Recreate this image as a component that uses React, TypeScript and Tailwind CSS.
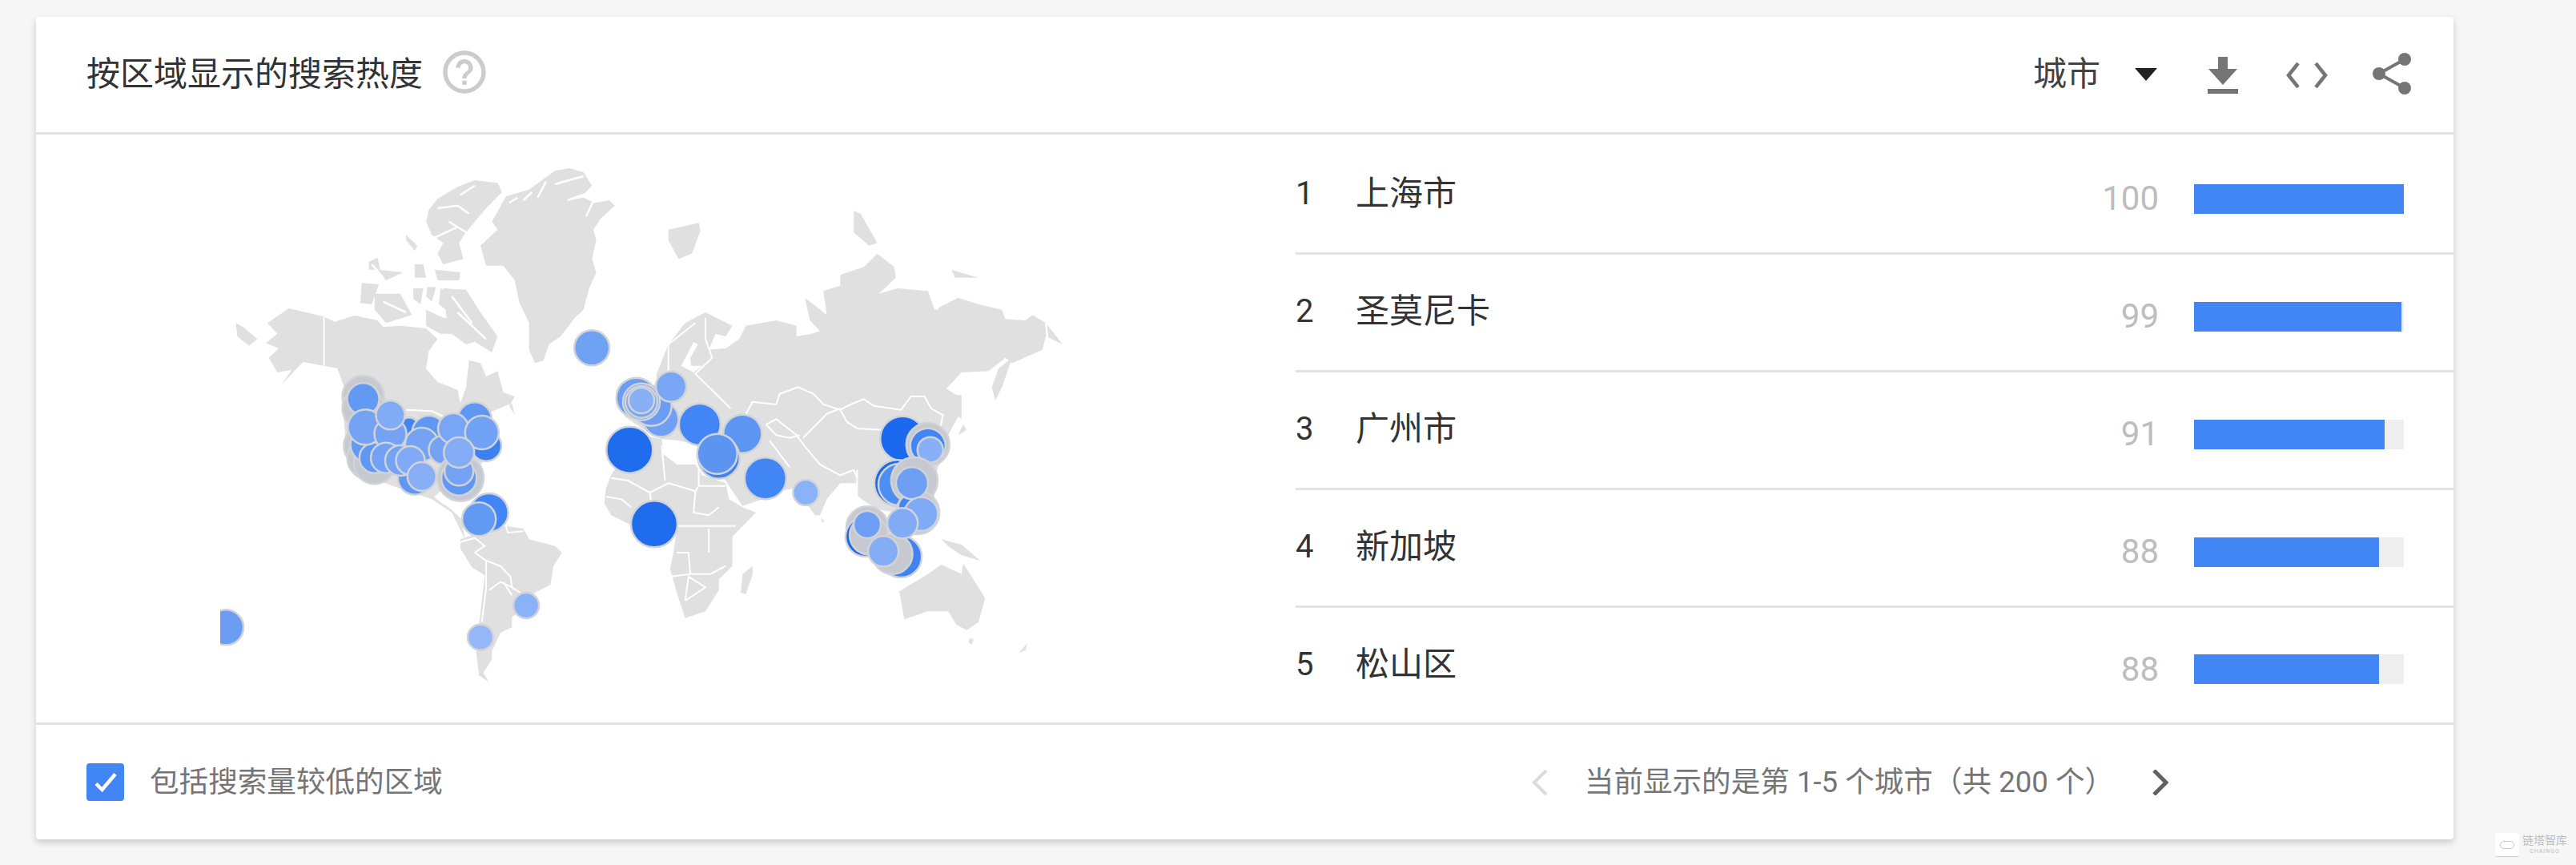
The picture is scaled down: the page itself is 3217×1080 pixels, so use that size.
import React from "react";

type Pt = [number, number];
const mk = (ox: number, oy: number, sx: number) => (a: number[]): Pt[] => {
  const r: Pt[] = [];
  for (let i = 0; i < a.length; i += 2) r.push([ox + a[i] / sx, oy + a[i + 1] / 3]);
  return r;
};
const z3 = mk(250, 190, 2.8);
const z4 = mk(250, 500, 2.8);
const z5 = mk(700, 190, 2.376);
const z6 = mk(700, 500, 2.376);
const s = (p: Pt[]) => p.map((q) => q[0].toFixed(1) + "," + q[1].toFixed(1)).join(" ");

const land: Pt[][] = [
  // Greenland
  z3([1290,60,1340,75,1370,125,1340,160,1290,180,1340,170,1380,190,1430,180,1450,200,1400,250,1375,290,1385,330,1370,400,1385,450,1360,510,1340,590,1310,620,1260,690,1220,720,1200,780,1170,790,1150,740,1150,640,1115,560,1100,480,1060,425,1000,425,980,350,1040,290,1020,260,1070,165,1150,140,1240,70]),
  // North America
  [...z3([235,640,310,585,430,615,470,635,540,612,620,630,640,655,700,650,790,660,830,700,800,745,790,810,830,860,900,890,910,940,930,880,940,780,980,790,1000,840,1040,820,1060,900,1100,915,1080,950,1100,985]),
   ...z4([1090,10,1000,50,1030,130,1000,220,960,260,980,320,900,360,840,340,820,360,880,410,915,445,925,520,880,420,810,370,700,330,620,300,540,250,510,170,500,40]),
   ...z3([510,900,480,810,430,800,360,785,320,830,285,870,320,815,270,825,240,770,275,735,230,715,270,680])],
  z3([125,640,150,655,200,700,170,725,130,690]),
  // Arctic islands
  z3([900,130,960,105,1040,115,1055,150,1000,210,960,260,930,300,905,340,920,400,850,420,830,380,850,340,810,310,790,260,800,215,830,175]),
  z3([850,510,930,515,980,600,1040,690,1020,750,960,710,930,720,880,680,860,610]),
  z3([610,530,700,530,740,610,650,640,610,590]),
  z3([565,490,625,495,600,570,560,565]),
  z3([590,410,620,395,630,440,590,440]),
  z3([620,440,710,450,650,480]),
  z3([820,440,910,450,905,480,830,480]),
  z3([750,420,780,420,790,470,750,470]),
  z3([745,510,780,510,770,570,745,550]),
  z3([795,505,825,505,810,560,790,540]),
  z3([840,510,860,520,860,590,835,570]),
  z3([720,310,760,350,750,370,720,330]),
  z3([790,590,850,620,880,620,900,680,840,680,790,650]),
  // South America
  z4([910,520,960,500,1000,490,1070,470,1130,480,1150,520,1240,545,1265,570,1235,620,1225,690,1170,720,1140,780,1090,810,1090,850,1050,870,1020,940,1020,970,990,1020,1010,1055,975,1030,965,940,975,840,990,700,995,655,950,625,910,555]),
  // Eurasia
  [...z5([285,830,320,720,370,640,430,600,510,650,490,690,460,680,440,740,490,735,530,700,550,650,640,630,700,650,700,690,745,680,770,670,740,630,725,545,790,610,780,520,830,500,830,460,900,430,940,380,990,430,995,470,945,530,1000,510,1090,520,1110,590,1180,545,1240,570,1310,590,1320,625,1380,630,1400,610,1440,640,1490,720,1440,690,1430,740,1340,790,1320,770,1270,820,1190,825,1145,885,1175,910,1190,910,1190,1000]),
   ...z6([1180,60,1150,130,1140,200,1120,250,1110,300,1110,420,1040,460,1010,425,960,410,975,420,930,400,880,360,880,310,830,310,790,370,770,430,755,430,720,370,690,330,650,340,600,370,540,395,495,310,470,260,420,170,350,150,300,145,260,120,190,60,200,20]),
   ...z5([250,920,285,860])],
  // Africa
  z6([130,385,135,330,150,280,190,200,240,130,300,145,305,200,345,240,400,240,420,280,490,310,500,370,540,400,580,420,510,510,510,620,470,670,470,710,430,790,370,815,345,720,325,630,335,570,345,480,300,470,215,470,150,430]),
  z6([570,620,570,650,550,725,535,720,540,650]),
  // Australia & co
  z6([1130,615,1190,650,1195,610,1260,740,1240,830,1205,860,1175,840,1150,790,1090,790,1020,820,1005,715,1090,650]),
  z6([1215,890,1225,895,1220,915,1210,905]),
  z6([1385,910,1360,945,1380,935]),
  z6([1130,520,1190,540,1245,600,1190,580,1150,545]),
  z6([775,440,785,455,775,455]),
  z6([1195,90,1205,110,1180,130]),
  // Siberia islands
  z5([320,290,410,265,415,295,390,380,350,400,320,330]),
  z5([870,220,890,230,940,340,915,350,870,300]),
  z5([1160,440,1240,470,1170,470]),
  z5([1300,810,1340,770,1310,880,1290,930,1280,880]),
];

const water: Pt[][] = [
  z6([310,170,340,160,395,175,400,240,345,240,310,200]),
  z5([358,800,395,712,408,720,385,770,388,800,420,800,395,825]),
  z3([800,745,860,740,930,770,940,800,910,890,830,860,790,810]),
];

const fjords: Pt[][] = [
  z3([1080,190,1110,170]), z3([1130,180,1160,150]), z3([1180,170,1210,110]), z3([1240,120,1340,90]),
  z3([1285,180,1350,155]), z3([1350,240,1380,170]),
  z3([830,210,900,200,940,230]), z3([870,260,930,300]), z3([820,320,900,280]), z3([910,160,960,125]),
  z3([880,540,950,640]), z3([900,600,1000,700]),
  z3([640,560,720,600]), z3([600,420,640,470]),
  z5([1440,640,1445,700]), z5([1100,550,1120,590]),
];

const borders: Pt[][] = [
  z3([433,618,433,800]),
  z4([720,35,810,40,850,60]),
  z4([960,570,1000,600,1050,620,1085,660,1090,700,1120,720]),
  z4([1000,600,1000,700,985,830]),
  z4([1010,710,1050,680,1090,700]),
  z4([1060,680,1090,730]),
  z4([1070,470,1075,495,1130,490]),
  z4([910,530,960,515,995,545,960,570]),
  z4([820,360,850,385,880,400]),
  z5([550,980,570,935,640,945,650,905,705,880,750,905,780,945,830,965,860,945,900,925,930,950,1010,965,1040,915,1080,915,1100,960,1135,985,1125,1040]),
  z5([830,965,850,1010,880,1035,950,1040,1010,1010]),
  z5([320,820,320,720,400,640]),
  z5([430,620,430,700,450,770,400,830,440,880,505,960]),
  z5([550,980,580,1010]),
  z6([610,90,640,70,700,130,730,180,770,240,830,280,870,260,880,290]),
  z6([720,140,790,50,830,30]),
  z6([610,90,640,130,680,140,710,130]),
  z6([620,150,680,250]),
  z6([880,260,880,360,920,400]),
  z6([150,290,200,300,265,345,320,310,350,320,400,340,410,320,410,250]),
  z6([300,170,310,300]),
  z6([265,345,270,390]),
  z6([410,320,490,320]),
  z6([400,340,395,420,440,430,470,400]),
  z6([345,470,470,470,520,470]),
  z6([345,570,380,570,385,650,325,660]),
  z6([385,650,445,650,490,620]),
  z6([440,570,440,480]),
  z6([370,750,380,660,430,700,370,750]),
  z6([135,360,180,370,210,400]),
];

type C = [Pt[], number, string];
const G = "#c6c9cf";
const at = (f: (a: number[]) => Pt[], x: number, y: number, r: number, c: string): C => [f([x, y]), r, c];
const dots: C[] = [
  at(z4,570,-15,26,G), at(z4,570,30,26,G), at(z4,575,170,26,G), at(z4,590,215,27,G), at(z4,610,235,26,G),
  at(z4,570,-5,20,"#6299f2"), at(z4,590,165,23,"#6299f2"), at(z4,610,215,19,"#5f97f3"),
  at(z4,578,100,22,"#75a3f4"), at(z4,730,100,12,"#4285f4"), at(z4,665,125,20,"#74a3f5"), at(z4,665,55,18,"#82abf5"),
  at(z4,650,215,19,"#72a2f5"), at(z4,800,120,21,"#5f97f3"), at(z4,775,165,21,"#74a2f5"),
  at(z4,750,290,21,"#5f97f3"), at(z4,700,225,19,"#74a2f5"), at(z4,735,225,18,"#80aaf6"), at(z4,775,285,18,"#88aff6"),
  at(z4,1000,170,19,"#3d80ef"), at(z4,960,70,21,"#5f97f3"), at(z4,850,185,18,"#74a2f5"),
  at(z4,910,290,29,G), at(z4,905,290,22,"#5f97f3"), at(z4,905,265,18,"#74a3f5"),
  at(z4,885,105,19,"#78a5f5"), at(z4,985,120,21,"#72a2f4"), at(z4,905,195,19,"#85adf6"),
  at(z4,1010,420,24,"#4285f4"), at(z4,975,445,21,"#6299f2"), at(z4,1140,768,16,"#8ab2f6"), at(z4,980,887,16,"#93b7f7"),
  at(z4,90,850,22,"#6a9df3"),
  at(z5,93,733,22,"#70a2f4"),
  at(z6,298,70,22,"#70a0f4"), at(z5,225,920,25,"#6a9df3"), at(z5,270,950,25,"#6a9df3"),
  at(z5,240,935,23,"#6a9df3"), at(z5,240,935,20,"#7aa7f5"), at(z5,240,930,16,"#88b0f6"), at(z5,328,878,19,"#7aa7f5"),
  at(z6,413,90,26,"#4285f4"), at(z6,540,125,24,"#5c95f2"), at(z6,205,185,29,"#1f6ded"),
  at(z6,470,215,26,"#3f82f0"), at(z6,465,200,25,"#5c94f2"), at(z6,608,292,26,"#4285f4"), at(z6,728,345,16,"#8ab2f6"),
  at(z6,278,463,29,"#1f6ded"),
  at(z6,1015,143,28,"#1a69ee"), at(z6,1090,165,27,G), at(z6,1090,170,22,"#4285f4"), at(z6,1097,185,16,"#88b0f6"),
  at(z6,1000,310,29,"#1a69ee"), at(z6,1005,315,26,"#4e8ef3"), at(z6,1050,300,29,G), at(z6,1060,420,27,G), at(z6,1040,400,16,"#4285f4"),
  at(z6,1043,310,20,"#6e9ff4"), at(z6,1070,425,21,"#80aaf5"),
  at(z6,1010,585,26,"#3f82f0"), at(z6,910,475,26,G), at(z6,905,510,25,"#1a69ee"), at(z6,915,505,24,G), at(z6,985,575,25,G), at(z6,958,565,19,"#85adf6"),
  at(z6,910,465,17,"#6f9ff4"), at(z6,1015,460,19,"#82abf5"),
];

function WorldMap() {
  return (
    <svg width="1100" height="734" viewBox="275 168 1100 734" className="block">
      {land.map((p, i) => <polygon key={i} points={s(p)} fill="#e0e0e0" />)}
      {water.map((p, i) => <polygon key={i} points={s(p)} fill="#ffffff" />)}
      {fjords.map((p, i) => <polyline key={i} points={s(p)} fill="none" stroke="#ffffff" strokeWidth="2.5" />)}
      {borders.map((p, i) => <polyline key={i} points={s(p)} fill="none" stroke="#ffffff" strokeWidth="2" />)}
      {dots.map(([p, r, c], i) => (
        <circle key={i} cx={p[0][0]} cy={p[0][1]} r={r} fill={c} stroke="#d0d3d7" strokeWidth="2.5" />
      ))}
    </svg>
  );
}

const rows = [
  { n: 1, name: "上海市", v: 100 },
  { n: 2, name: "圣莫尼卡", v: 99 },
  { n: 3, name: "广州市", v: 91 },
  { n: 4, name: "新加坡", v: 88 },
  { n: 5, name: "松山区", v: 88 },
];

const font = "font-['Roboto','Noto_Sans_CJK_SC',sans-serif]";

export default function App() {
  return (
    <div className={`relative min-h-[1080px] bg-[#f6f6f6] pl-[45px] pt-[21px] ${font}`}>
      <div className="w-[3019px] rounded-[4px] bg-white shadow-[0_4px_8px_rgba(0,0,0,0.18)]">
        <div className="flex h-[147px] items-center border-b-[3px] border-[#e2e2e2] pl-[63px] pr-[53px]">
          <div className="text-[42px] leading-[48px] text-[#333333]">按区域显示的搜索热度</div>
          <svg width="64" height="64" viewBox="0 0 24 24" className="ml-[20px] mt-[-6px]" fill="#cccccc">
            <path d="M11 18h2v-2h-2v2zm1-16C6.48 2 2 6.48 2 12s4.48 10 10 10 10-4.48 10-10S17.52 2 12 2zm0 18c-4.41 0-8-3.59-8-8s3.59-8 8-8 8 3.59 8 8-3.59 8-8 8zm0-14c-2.21 0-4 1.79-4 4h2c0-1.1.9-2 2-2s2 .9 2 2c0 2-3 1.75-3 5h2c0-2.25 3-2.5 3-5 0-2.21-1.79-4-4-4z" />
          </svg>
          <div className="ml-auto flex items-center">
            <span className="text-[42px] leading-[48px] text-[#424242]">城市</span>
            <svg width="28" height="16" viewBox="0 0 28 16" className="ml-[43px]" fill="#212121"><path d="M0 0h28L14 16z" /></svg>
            <svg width="38" height="46" viewBox="0 0 38 46" className="ml-[63px] mt-[2px]" fill="#757575"><path d="M13 0h12v15h12L19 35 1 15h12zM0 40h38v6H0z" /></svg>
            <svg width="52" height="32" viewBox="0 0 52 32" className="ml-[60px] mt-[2px]" fill="none" stroke="#757575" strokeWidth="4.5"><path d="M15 1L3 16l12 15M37 1l12 15-12 15" /></svg>
            <svg width="48" height="52" viewBox="0 0 48 52" className="ml-[56px] mt-[-2px]" fill="#757575">
              <circle cx="40" cy="8" r="8" /><circle cx="40" cy="44" r="8" /><circle cx="8" cy="26" r="8" />
              <path d="M8 26L40 8M8 26l32 18" stroke="#757575" strokeWidth="4" />
            </svg>
          </div>
        </div>
        <div className="flex h-[734px]">
          <div className="w-[1573px] pl-[230px]"><WorldMap /></div>
          <div className="flex-1 pt-[3px]">
            {rows.map((r, i) => (
              <div key={r.n} className={`flex items-center ${i < 4 ? "h-[147px] border-b-[3px] border-[#e2e2e2]" : "h-[143px]"}`}>
                <div className="mt-[-2px] w-[75px] text-[40px] leading-[48px] text-[#333333]">{r.n}</div>
                <div className="mt-[-2px] text-[42px] leading-[48px] text-[#333333]">{r.name}</div>
                <div className="ml-auto mt-[10px] text-[42px] leading-[48px] text-[#bdbdbd]">{r.v}</div>
                <div className="ml-[44px] mr-[62px] mt-[10px] h-[37px] w-[262px] bg-[#eeeeee]">
                  <div className="h-full bg-[#4285f4]" style={{ width: `${r.v}%` }} />
                </div>
              </div>
            ))}
          </div>
        </div>
        <div className="flex h-[146px] items-center border-t-[3px] border-[#e2e2e2] pl-[63px]">
          <div className="flex h-[47px] w-[47px] items-center justify-center rounded-[4px] bg-[#4285f4]">
            <svg width="36" height="36" viewBox="0 0 24 24" fill="none" stroke="#ffffff" strokeWidth="3"><path d="M4 13l5 5L20 5" /></svg>
          </div>
          <div className="ml-[32px] text-[36.6px] leading-[44px] text-[#757575]">包括搜索量较低的区域</div>
          <div className="ml-[1360px] flex items-center">
            <svg width="20" height="32" viewBox="0 0 20 32" fill="none" stroke="#dcdcdc" strokeWidth="4"><path d="M18 1L3 16l15 15" /></svg>
            <div className="ml-[46px] text-[36.6px] leading-[44px] text-[#757575]">当前显示的是第 1-5 个城市（共 200 个）</div>
            <svg width="20" height="32" viewBox="0 0 20 32" className="ml-[48px]" fill="none" stroke="#616161" strokeWidth="5"><path d="M2 1l15 15L2 31" /></svg>
          </div>
        </div>
      </div>
      <div className="absolute left-[3116px] top-[1040px] flex items-start">
        <div className="flex h-[30px] w-[30px] items-center justify-center rounded-[3px] border-b border-[#c8c8c8] bg-white">
          <div className="h-[10px] w-[18px] rounded-[5px] border border-[#c8c8c8]" />
        </div>
        <div className="ml-[4px] flex flex-col items-center">
          <div className="text-[14px] leading-[18px] text-[#bdbdbd]">链塔智库</div>
          <div className="text-[7px] leading-[10px] tracking-[1px] text-[#bdbdbd]">CHAINGO</div>
        </div>
      </div>
    </div>
  );
}
